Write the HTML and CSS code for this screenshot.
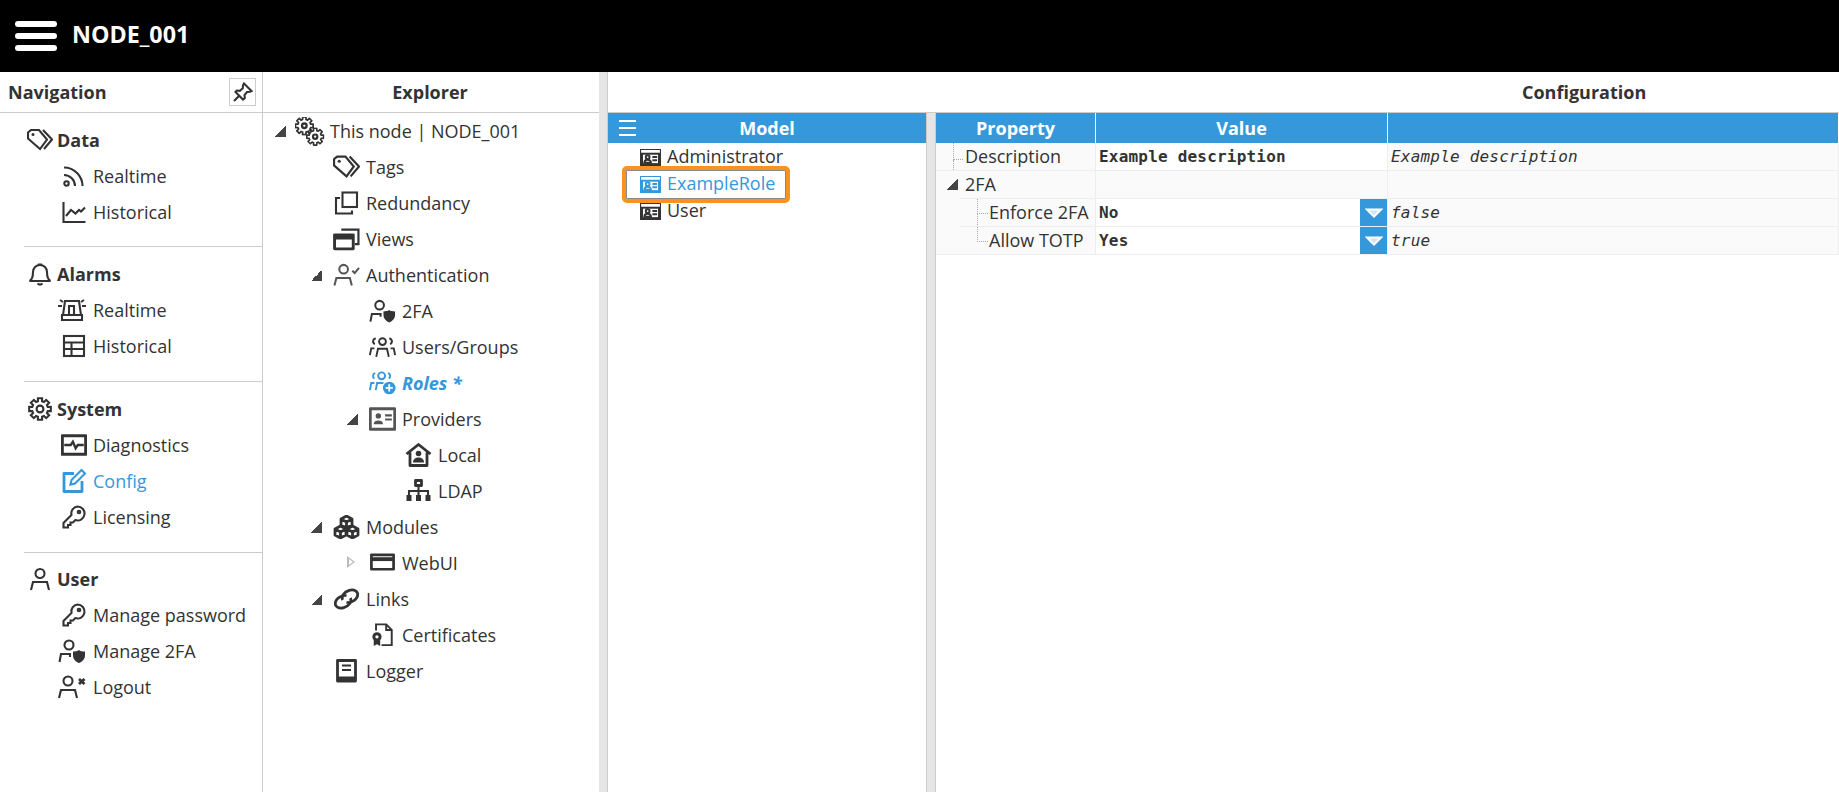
FILE: index.html
```html
<!DOCTYPE html>
<html lang="en">
<head>
<meta charset="utf-8">
<title>NODE_001</title>
<link rel="stylesheet" href="styles.css">
</head>
<body>
<svg class="defs" width="0" height="0" aria-hidden="true">
  <defs>
    <path id="gear-shape" d="M19.730 9.930 22.800 9.900V14.100L19.730 14.070 18.930 16 21.120 18.150 18.150 21.120 16 18.930 14.070 19.730 14.100 22.800H9.900L9.930 19.730 8 18.930 5.850 21.120 2.880 18.150 5.070 16 4.270 14.070 1.200 14.100V9.900L4.270 9.930 5.070 8 2.880 5.850 5.850 2.880 8 5.070 9.930 4.270 9.900 1.200H14.100L14.070 4.270 16 5.070 18.150 2.880 21.120 5.850 18.930 8z"/>
    <symbol id="i-tag" viewBox="0 0 26 22"><path d="M1 3.500 4 1h8l8 9.500-7 9.500L1 9.500z"/><path d="M16 1l9 9.500-8 9.500"/><circle cx="6" cy="5.500" r="1.500" class="solid"/></symbol>
    <symbol id="i-rss" viewBox="0 0 24 24"><circle cx="4.500" cy="19.500" r="2.200"/><path d="M2 11a11 11 0 0 1 11 11"/><path d="M2 3.500a18.500 18.500 0 0 1 18.500 18.500"/></symbol>
    <symbol id="i-chart" viewBox="0 0 24 24"><path d="M1.500 2v20h22"/><path d="M4 16l5-6 4.500 3.500L17 10l2 1.500 4-4"/></symbol>
    <symbol id="i-bell" viewBox="0 0 24 24"><path d="M12 3a7 7 0 0 0-7 7c0 6-1.500 8-3.500 9h21c-2-1-3.500-3-3.500-9a7 7 0 0 0-7-7z"/><path d="M10 2.500h4M9.500 21.500c1.500 1.300 3.500 1.300 5 0"/></symbol>
    <symbol id="i-siren" viewBox="0 0 30 24"><path d="M8 3h14l2 14H6z"/><path d="M12 16V8h5v8"/><path d="M5 17h20v5H5z"/><path d="M1 8h4M25 8h4M3 2l3 2M27 2l-3 2"/></symbol>
    <symbol id="i-table" viewBox="0 0 24 24"><rect x="2" y="2" width="20" height="20"/><path d="M2 8.500h20M2 15h20M9.500 8.500V22"/></symbol>
    <symbol id="i-gear" viewBox="0 0 24 24"><use href="#gear-shape"/><circle cx="12" cy="12" r="3.400"/></symbol>
    <symbol id="i-gears" viewBox="0 0 28 28"><svg x="-1" y="-1" width="19" height="19" viewBox="0 0 24 24"><use href="#gear-shape" class="heavy"/><circle class="heavy" cx="12" cy="12" r="2.800"/></svg><svg x="10" y="10" width="18" height="18" viewBox="0 0 24 24"><use href="#gear-shape" class="heavy"/><circle class="heavy" cx="12" cy="12" r="2.800"/></svg></symbol>
    <symbol id="i-pulse" viewBox="0 0 24 20"><rect x="1.200" y="1.500" width="21.600" height="17" class="heavy"/><path d="M3 10h6l2-3 2.500 6 2-3H21"/></symbol>
    <symbol id="i-edit" viewBox="0 0 24 24"><path d="M12 4.500H2v18h18V12" class="heavy"/><path d="M8.500 15.500l1-4.500L19.500 1l3.500 3.500-10 10z"/></symbol>
    <symbol id="i-key" viewBox="0 0 24 24"><path d="M15.500 1.500a7 7 0 1 1-2.300 13.600l-2.200 2.400H8.500v2.500H6v2.500H1.500v-4.500l8-8a7 7 0 0 1 6-8.500z"/><circle cx="17" cy="7" r="1.300"/></symbol>
    <symbol id="i-user" viewBox="0 0 24 24"><circle cx="12" cy="6.500" r="4.500"/><path d="M3 23l2-8h14l2 8"/></symbol>
    <symbol id="i-user-shield" viewBox="0 0 28 24"><circle cx="11" cy="6" r="4.500"/><path d="M1.500 23l1.500-8h9v3M3 15h9"/><path class="solid" d="M15 12.500c2 0 4.500-.500 6-1.500 1 1 3.500 1.500 6 1.500v4c0 3.500-2.500 6-6 7.500-3.500-1.500-6-4-6-7.500z"/></symbol>
    <symbol id="i-user-x" viewBox="0 0 30 24"><circle cx="11" cy="6" r="4.500"/><path d="M2 23l2-8h14l2 8"/><path class="heavy" d="M22 4l5.500 5M27.500 4 22 9"/></symbol>
    <symbol id="i-user-check" viewBox="0 0 28 24"><circle cx="11" cy="6" r="4.500"/><path d="M1.500 23l2-8h14l2 8"/><path d="M20 7.500l2.500 2.500L27 4.500"/></symbol>
    <symbol id="i-users" viewBox="0 0 30 24"><circle cx="15" cy="6" r="3.800"/><path d="M8 23l2-9h10l2 9"/><path d="M7.500 2.500a3.300 3.300 0 0 0-1 6.300M22.500 2.500a3.300 3.300 0 0 1 1 6.300"/><path d="M1 21l1.500-7.500H6M29 21l-1.500-7.500H24"/></symbol>
    <symbol id="i-roles" viewBox="0 0 30 26"><circle cx="14" cy="5" r="3.800"/><path d="M7 2a3.300 3.300 0 0 0-1 6M21 2a3.300 3.300 0 0 1 1 6"/><path d="M1 21l1.500-8H6M7.500 21l1.500-8h7"/><circle cx="22.500" cy="18.500" r="7" class="solid"/><path class="plus" d="M22.500 14.500v8M18.500 18.500h8"/></symbol>
    <symbol id="i-copy" viewBox="0 0 24 24"><rect x="8" y="1.500" width="14.500" height="14.500"/><path d="M5.500 7H1.500v15.500h16v-3"/></symbol>
    <symbol id="i-views" viewBox="0 0 26 22"><path d="M8 2h16.500v14H21"/><rect x="1.500" y="7" width="18" height="13.500" class="heavy"/><path d="M1.500 9.500h18" class="bar"/></symbol>
    <symbol id="i-card" viewBox="0 0 26 22"><rect x="1.200" y="1.200" width="23.600" height="19.600" class="heavy"/><circle cx="9" cy="8" r="2.600" class="solid"/><path class="solid" d="M4.500 16c0-2.500 2-3.500 4.500-3.500s4.500 1 4.500 3.500z"/><path d="M15.500 7.500H22M15.500 11.500H22"/></symbol>
    <symbol id="i-house" viewBox="0 0 26 24"><path class="heavy" d="M1 11 13 1.500 25 11M4.500 9.500V22.500h17V9.500"/><circle cx="13" cy="10.500" r="2.800" class="solid"/><path class="solid" d="M7.500 19.500c0-3.500 2.500-5 5.500-5s5.500 1.500 5.500 5z"/></symbol>
    <symbol id="i-ldap" viewBox="0 0 26 24"><rect x="10" y="1.500" width="6" height="5" class="heavy"/><path d="M13 6.500V16M3.500 16v-4h19v4"/><rect x="1" y="16" width="5" height="6" class="solid"/><rect x="10.500" y="16" width="5" height="6" class="solid"/><rect x="20" y="16" width="5" height="6" class="solid"/></symbol>
    <symbol id="i-cubes" viewBox="0 0 26 24"><path class="heavy" d="M13 1l5.500 3v6L13 13 7.500 10V4zM7.500 4 13 7l5.500-3M13 7v6"/><path class="heavy" d="M7 11l5.500 3v6L7 23l-5.500-3v-6zM1.500 14 7 17l5.500-3M7 17v6"/><path class="heavy" d="M19 11l5.500 3v6L19 23l-5.500-3v-6zM13.500 14l5.500 3 5.500-3M19 17v6"/></symbol>
    <symbol id="i-window" viewBox="-1 -2 28 24"><rect x="1.500" y="1.500" width="23" height="15" class="heavy"/><path d="M1.500 6h23" class="bar"/></symbol>
    <symbol id="i-link" viewBox="0 0 28 20"><path class="heavy" d="M14 6.500A8.500 6 -25 1 0 18 9"/><path class="heavy" d="M14 13.500A8.500 6 -25 1 0 10 11"/></symbol>
    <symbol id="i-cert" viewBox="0 0 24 26"><path d="M5 8V1.500h11l6 6V24H11"/><path d="M16 1.500v6h6"/><circle cx="6" cy="15" r="5" class="solid"/><path class="solid" d="M2.500 18v7l3.500-2 3.500 2v-7z"/><circle cx="6" cy="15" r="1.800" class="hole"/></symbol>
    <symbol id="i-book" viewBox="0 0 24 24"><path class="heavy" d="M3 19V1.500h18V22H3v-3h18"/><path d="M7.500 6.500h9M7.500 11h9"/></symbol>
    <symbol id="i-pin" viewBox="0 0 20 20"><path d="M11 1.500 18.500 9l-1.500.800-3 .200-2.500 3 .300 3L10 17.500 2.500 10l1.300-1.500 3 .300 3-2.500.200-3z"/><path d="M6 14 1 19"/></symbol>
    <symbol id="i-role-card" viewBox="0 0 22 18"><rect x="0" y="0" width="22" height="18" class="band"/><rect x="2" y="5" width="18" height="11" class="card-in"/><circle cx="8" cy="8.500" r="2" class="band"/><path class="band" d="M4.500 14.500c0-2 1.500-3 3.500-3s3.500 1 3.500 3z"/><path class="card-line" d="M13 8.500h5M13 12h5"/></symbol>
  </defs>
</svg>

<header class="topbar">
  <div class="burger"><span></span><span></span><span></span></div>
  <div class="node-title">NODE_001</div>
</header>

<main class="workspace">
  <aside class="nav-panel">
    <div class="panel-head nav-head">
      <span>Navigation</span>
      <button class="pin" type="button"><svg class="ico ico-pin"><use href="#i-pin"/></svg></button>
    </div>
    <section class="nav-group">
      <div class="nav-title"><svg class="ico"><use href="#i-tag"/></svg>Data</div>
      <div class="nav-item"><svg class="ico"><use href="#i-rss"/></svg>Realtime</div>
      <div class="nav-item"><svg class="ico"><use href="#i-chart"/></svg>Historical</div>
    </section>
    <section class="nav-group">
      <div class="nav-title"><svg class="ico"><use href="#i-bell"/></svg>Alarms</div>
      <div class="nav-item"><svg class="ico ico-w"><use href="#i-siren"/></svg>Realtime</div>
      <div class="nav-item"><svg class="ico"><use href="#i-table"/></svg>Historical</div>
    </section>
    <section class="nav-group">
      <div class="nav-title"><svg class="ico"><use href="#i-gear"/></svg>System</div>
      <div class="nav-item"><svg class="ico"><use href="#i-pulse"/></svg>Diagnostics</div>
      <div class="nav-item active"><svg class="ico"><use href="#i-edit"/></svg>Config</div>
      <div class="nav-item"><svg class="ico"><use href="#i-key"/></svg>Licensing</div>
    </section>
    <section class="nav-group last">
      <div class="nav-title"><svg class="ico"><use href="#i-user"/></svg>User</div>
      <div class="nav-item"><svg class="ico"><use href="#i-key"/></svg>Manage password</div>
      <div class="nav-item"><svg class="ico ico-w"><use href="#i-user-shield"/></svg>Manage 2FA</div>
      <div class="nav-item"><svg class="ico ico-w"><use href="#i-user-x"/></svg>Logout</div>
    </section>
  </aside>

  <section class="explorer">
    <div class="panel-head center explorer-head">Explorer</div>
    <ul class="tree">
      <li><div class="node"><span class="tw open"></span><svg class="ico ico-lg"><use href="#i-gears"/></svg>This node | NODE_001</div>
        <ul>
          <li><div class="node"><span class="tw"></span><svg class="ico"><use href="#i-tag"/></svg>Tags</div></li>
          <li><div class="node"><span class="tw"></span><svg class="ico"><use href="#i-copy"/></svg>Redundancy</div></li>
          <li><div class="node"><span class="tw"></span><svg class="ico"><use href="#i-views"/></svg>Views</div></li>
          <li><div class="node"><span class="tw open"></span><svg class="ico muted"><use href="#i-user-check"/></svg>Authentication</div>
            <ul>
              <li><div class="node"><span class="tw"></span><svg class="ico"><use href="#i-user-shield"/></svg>2FA</div></li>
              <li><div class="node"><span class="tw"></span><svg class="ico"><use href="#i-users"/></svg>Users/Groups</div></li>
              <li><div class="node selected"><span class="tw"></span><svg class="ico"><use href="#i-roles"/></svg>Roles *</div></li>
              <li><div class="node"><span class="tw open"></span><svg class="ico muted"><use href="#i-card"/></svg>Providers</div>
                <ul>
                  <li><div class="node"><span class="tw"></span><svg class="ico"><use href="#i-house"/></svg>Local</div></li>
                  <li><div class="node"><span class="tw"></span><svg class="ico"><use href="#i-ldap"/></svg>LDAP</div></li>
                </ul>
              </li>
            </ul>
          </li>
          <li><div class="node"><span class="tw open"></span><svg class="ico"><use href="#i-cubes"/></svg>Modules</div>
            <ul>
              <li><div class="node"><span class="tw closed"></span><svg class="ico"><use href="#i-window"/></svg>WebUI</div></li>
            </ul>
          </li>
          <li><div class="node"><span class="tw open"></span><svg class="ico"><use href="#i-link"/></svg>Links</div>
            <ul>
              <li><div class="node"><span class="tw"></span><svg class="ico"><use href="#i-cert"/></svg>Certificates</div></li>
            </ul>
          </li>
          <li><div class="node"><span class="tw"></span><svg class="ico"><use href="#i-book"/></svg>Logger</div></li>
        </ul>
      </li>
    </ul>
  </section>

  <div class="splitter"></div>

  <section class="config">
    <div class="panel-head config-head">Configuration</div>
    <div class="config-body">
      <div class="model">
        <div class="model-head"><span class="model-menu"><span></span><span></span><span></span></span>Model</div>
        <div class="model-row"><svg class="card-ico"><use href="#i-role-card"/></svg>Administrator</div>
        <div class="model-row current"><svg class="card-ico"><use href="#i-role-card"/></svg>ExampleRole</div>
        <div class="model-row"><svg class="card-ico"><use href="#i-role-card"/></svg>User</div>
        <div class="highlight"></div>
      </div>
      <div class="splitter inner"></div>
      <div class="props">
        <div class="prow head"><div>Property</div><div>Value</div><div></div></div>
        <div class="prow">
          <div class="pname"><span class="dots d-top"></span>Description</div>
          <div class="pval">Example description</div>
          <div class="pdef">Example description</div>
        </div>
        <div class="prow shaded">
          <div class="pname inset"><span class="tw open small"></span>2FA</div>
          <div class="pval"></div>
          <div class="pdef"></div>
        </div>
        <div class="prow">
          <div class="pname sub inset"><span class="dots d-sub"></span>Enforce 2FA</div>
          <div class="pval">No<span class="drop"><svg width="18" height="10" viewBox="0 0 18 10"><path d="M2 1.500h14L9 8.500z"/></svg></span></div>
          <div class="pdef">false</div>
        </div>
        <div class="prow">
          <div class="pname sub"><span class="dots d-sub end"></span>Allow TOTP</div>
          <div class="pval">Yes<span class="drop"><svg width="18" height="10" viewBox="0 0 18 10"><path d="M2 1.500h14L9 8.500z"/></svg></span></div>
          <div class="pdef">true</div>
        </div>
      </div>
    </div>
  </section>
</main>
</body>
</html>
```

FILE: styles.css
```css
* { box-sizing: border-box; }
html, body { margin: 0; height: 100%; }
body {
  width: 1839px;
  height: 792px;
  overflow: hidden;
  font-family: "Open Sans", "Noto Sans", sans-serif;
  font-size: 18px;
  color: #333;
  background: #fff;
  display: flex;
  flex-direction: column;
}
.defs { position: absolute; }
ul { list-style: none; margin: 0; padding: 0; }

svg path, svg rect, svg circle, svg use {
  fill: none;
  stroke: currentColor;
  stroke-width: 2.100;
}
svg .heavy { stroke-width: 2.800; stroke-linejoin: round; }
svg .solid { fill: currentColor; stroke: none; }
svg .hole { fill: #fff; stroke: none; }
svg .bar { stroke-width: 4; }
svg .plus { stroke: #fff; stroke-width: 2; }

.topbar {
  flex: 0 0 72px;
  background: #000;
  display: flex;
  align-items: center;
  padding-left: 15px;
  gap: 15px;
}
.burger { width: 42px; display: flex; flex-direction: column; gap: 6px; }
.burger span { display: block; height: 6px; border-radius: 3px; background: #fff; }
.node-title { font-size: 23.300px; font-weight: 700; color: #fff; line-height: 1; position: relative; top: -1px; }

.workspace { flex: 1; display: flex; min-height: 0; }

.panel-head {
  height: 41px;
  border-bottom: 1px solid #ccc;
  font-weight: 700;
  display: flex;
  align-items: center;
}
.panel-head.center { justify-content: center; }
.explorer-head { padding-right: 2px; }

.nav-panel { flex: 0 0 263px; border-right: 1px solid #ccc; }
.nav-head { justify-content: space-between; padding: 0 6px 0 8px; }
.pin {
  width: 27px;
  height: 28px;
  padding: 0;
  border: 1px solid #ccc;
  background: #fff;
  color: #333;
  display: flex;
  align-items: center;
  justify-content: center;
}
.ico { flex: none; width: 26px; height: 24px; }
.ico-pin { width: 20px; height: 20px; }

.nav-group {
  margin-left: 24px;
  border-bottom: 1px solid #ccc;
  padding: 9px 0 17px;
}
.nav-group:first-of-type { padding-bottom: 16px; }
.nav-group.last { border-bottom: 0; padding-top: 8px; }
.nav-title {
  height: 36px;
  display: flex;
  align-items: center;
  gap: 4px;
  font-weight: 700;
  padding-left: 3px;
}
.nav-item {
  height: 36px;
  display: flex;
  align-items: center;
  gap: 6px;
  padding-left: 37px;
}
.nav-item .ico-w { width: 30px; margin-left: -4px; }
.nav-item.active { color: #3498db; }

.explorer { flex: 0 0 336px; }
.tree { padding: 0 0 0 12px; }
.tree ul { padding-left: 36px; }
.node { height: 36px; display: flex; align-items: center; }
.node .ico { width: 27px; height: 24px; margin-right: 6px; margin-left: 2px; }
.node .ico-lg { width: 30px; height: 29px; margin-right: 5px; margin-left: 0; }
.tw { flex: none; width: 20px; height: 11px; }
.tw.open {
  background: linear-gradient(135deg, transparent 50%, #444 50%) 0 0 / 11px 11px no-repeat;
}
.tw.closed {
  background: none;
  position: relative;
}
.tw.closed::before {
  content: "";
  position: absolute;
  left: 0;
  top: -2px;
  border-left: 8px solid #bbb;
  border-top: 6px solid transparent;
  border-bottom: 6px solid transparent;
}
.tw.closed::after {
  content: "";
  position: absolute;
  left: 1.500px;
  top: 1px;
  border-left: 4px solid #fff;
  border-top: 3px solid transparent;
  border-bottom: 3px solid transparent;
}
.node.selected { color: #3498db; font-weight: 700; font-style: italic; }
.muted { color: #555; }

.splitter { flex: 0 0 9px; background: #e5e5e5; border-right: 1px solid #ccc; }
.splitter.inner { flex: 0 0 10px; border-left: 1px solid #ccc; background: #e5e5e5; }

.config { flex: 1; min-width: 0; display: flex; flex-direction: column; }
.config-head { padding-left: 914px; }
.config-body { flex: 1; display: flex; min-height: 0; }

.model { flex: 0 0 318px; position: relative; }
.model-head {
  height: 30px;
  background: #3498db;
  color: #fff;
  font-weight: 700;
  display: flex;
  align-items: center;
  justify-content: center;
  position: relative;
}
.model-menu {
  position: absolute;
  left: 11px;
  top: 7px;
  width: 17px;
  height: 16px;
  display: flex;
  flex-direction: column;
  justify-content: space-between;
}
.model-menu span { display: block; height: 2px; background: #fff; }
.model-row {
  height: 26.800px;
  display: flex;
  align-items: center;
  gap: 6px;
  padding-left: 32px;
  color: #333;
}
.card-ico { width: 21px; height: 17px; flex: none; margin-top: 3px; }
.card-ico .band { fill: #333; stroke: none; }
.card-ico .card-in { fill: #fff; stroke: none; }
.card-ico .card-line { stroke: #333; stroke-width: 1.500; }
.model-row.current { color: #3498db; }
.model-row.current .band { fill: #3498db; }
.model-row.current .card-line { stroke: #3498db; }
.highlight {
  position: absolute;
  left: 14px;
  top: 53px;
  width: 168px;
  height: 37px;
  border: 4px solid #f7931e;
  border-radius: 5px;
  box-shadow: inset 0 0 0 1px #8a8a8a;
}

.props { flex: 1; min-width: 0; }
.prow {
  display: grid;
  grid-template-columns: 160px 292px 1fr;
  height: 28px;
}
.prow > div {
  border-right: 1px solid #eee;
  border-bottom: 1px solid #eee;
  background: #fafafa;
  display: flex;
  align-items: center;
  position: relative;
}
.prow.head { height: 30px; }
.prow.head > div {
  background: #3498db;
  color: #fff;
  font-weight: 700;
  justify-content: center;
  border-right: 1px solid #fff;
  border-bottom: 0;
}
.pname { padding: 0 0 2px 29px; }
.pname.sub { padding-left: 53px; }
.prow > .pname.inset { border-bottom-color: transparent; }
.pname.inset::after {
  content: "";
  position: absolute;
  left: 24px;
  right: 0;
  bottom: -1px;
  height: 1px;
  background: #eee;
}
.pname .tw.small { position: absolute; left: 11px; top: 8px; width: 11px; }
.pval {
  font-family: "DejaVu Sans Mono", monospace;
  font-weight: 700;
  font-size: 16px;
  padding-left: 3px;
  letter-spacing: 0.200px;
}
.prow > .pval { background: #fff; }
.prow.shaded > .pval { background: #fafafa; }
.pdef {
  font-family: "DejaVu Sans Mono", monospace;
  font-style: italic;
  font-size: 16px;
  padding-left: 3px;
  letter-spacing: 0.200px;
}
.drop {
  position: absolute;
  right: 0;
  top: 0;
  width: 27px;
  height: 27px;
  background: #3498db;
  display: flex;
  align-items: center;
  justify-content: center;
}
.drop svg path { fill: #cfe6f6; stroke: #fff; stroke-width: 2; }
.dots { position: absolute; border-left: 1px dotted #aaa; border-bottom: 1px dotted #aaa; }
.d-top { left: 17px; top: 0; width: 10px; height: 17px; }
.d-top::after { content: ""; position: absolute; left: -1px; top: 17px; height: 12px; border-left: 1px dotted #aaa; }
.d-sub { left: 41px; top: 0; width: 11px; height: 15px; }
.d-sub::after { content: ""; position: absolute; left: -1px; top: 15px; height: 13px; border-left: 1px dotted #aaa; }
.d-sub.end::after { display: none; }
```
